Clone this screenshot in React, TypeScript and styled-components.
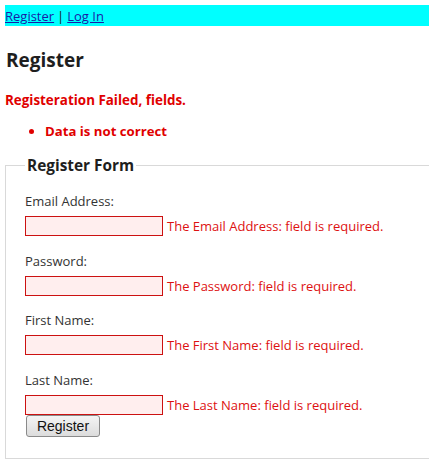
import React from "react";
import styled, { createGlobalStyle } from "styled-components";

const Global = createGlobalStyle`
  html, body { margin: 0; padding: 0; background: #fff; }
  body { padding: 5px 0 0 5px; font-family: "Open Sans", "Noto Sans", sans-serif; color: #222; overflow: hidden; }
`;

const TopBar = styled.div`
  background: #00ffff;
  height: 21px;
  display: flex;
  align-items: center;
  font-size: 13px;
  color: #222;
`;

const NavLink = styled.a`
  color: #1a1aa6;
  text-decoration: underline;
  cursor: pointer;
`;

const Sep = styled.span`
  margin: 0 3px;
`;

const Heading = styled.h2`
  font-size: 19px;
  font-weight: 700;
  margin: 22px 0 0 1px;
  color: #1e1e1e;
  line-height: 25px;
`;

const ErrorTitle = styled.div`
  color: #e00000;
  font-weight: 700;
  font-size: 13.4px;
  margin-top: 18px;
  line-height: 18px;
`;

const ErrorList = styled.ul`
  color: #e00000;
  font-weight: 700;
  font-size: 13.2px;
  margin: 13px 0 0;
  padding-left: 40px;
  line-height: 18px;
`;

const Fieldset = styled.fieldset`
  margin: 15px 0 0;
  border: 1px solid #d9d9d9;
  border-right: none;
  padding: 0 0 21px 19px;
`;

const Legend = styled.legend`
  font-size: 15.4px;
  font-weight: 700;
  color: #1e1e1e;
  padding: 0 2px;
`;

const Field = styled.div`
  display: flex;
  flex-direction: column;
  margin-top: 15.7px;
  &:first-of-type { margin-top: 16px; }
`;

const Label = styled.label`
  font-size: 13px;
  color: #333;
  line-height: 18px;
`;

const InputRow = styled.div`
  display: flex;
  align-items: center;
  margin-top: 6px;
`;

const Input = styled.input`
  width: 138px;
  height: 20px;
  box-sizing: border-box;
  border: 1px solid #cc1111;
  background: #ffeeee;
  margin: 0;
  padding: 0;
`;

const FieldError = styled.span`
  color: #dd1111;
  font-size: 13px;
  margin-left: 4px;
`;

const Button = styled.button`
  font-family: "Liberation Sans", Arial, sans-serif;
  font-size: 14px;
  width: 74px;
  height: 22px;
  margin: 0 0 0 1px;
  padding: 0;
  border: 1px solid #8a8a8a;
  border-radius: 3px;
  background: linear-gradient(#f4f4f4, #dcdcdc);
  color: #111;
  align-self: flex-start;
`;

const Fields = styled.div`
  display: flex;
  flex-direction: column;
`;

const fields = ["Email Address", "Password", "First Name", "Last Name"];

export default function App() {
  return (
    <>
      <Global />
      <TopBar>
        <NavLink>Register</NavLink>
        <Sep>|</Sep>
        <NavLink>Log In</NavLink>
      </TopBar>
      <Heading>Register</Heading>
      <ErrorTitle>Registeration Failed, fields.</ErrorTitle>
      <ErrorList>
        <li>Data is not correct</li>
      </ErrorList>
      <Fieldset>
        <Legend>Register Form</Legend>
        <Fields>
          {fields.map((f) => (
            <Field key={f}>
              <Label>{f}:</Label>
              <InputRow>
                <Input />
                <FieldError>The {f}: field is required.</FieldError>
              </InputRow>
            </Field>
          ))}
          <Button>Register</Button>
        </Fields>
      </Fieldset>
    </>
  );
}
